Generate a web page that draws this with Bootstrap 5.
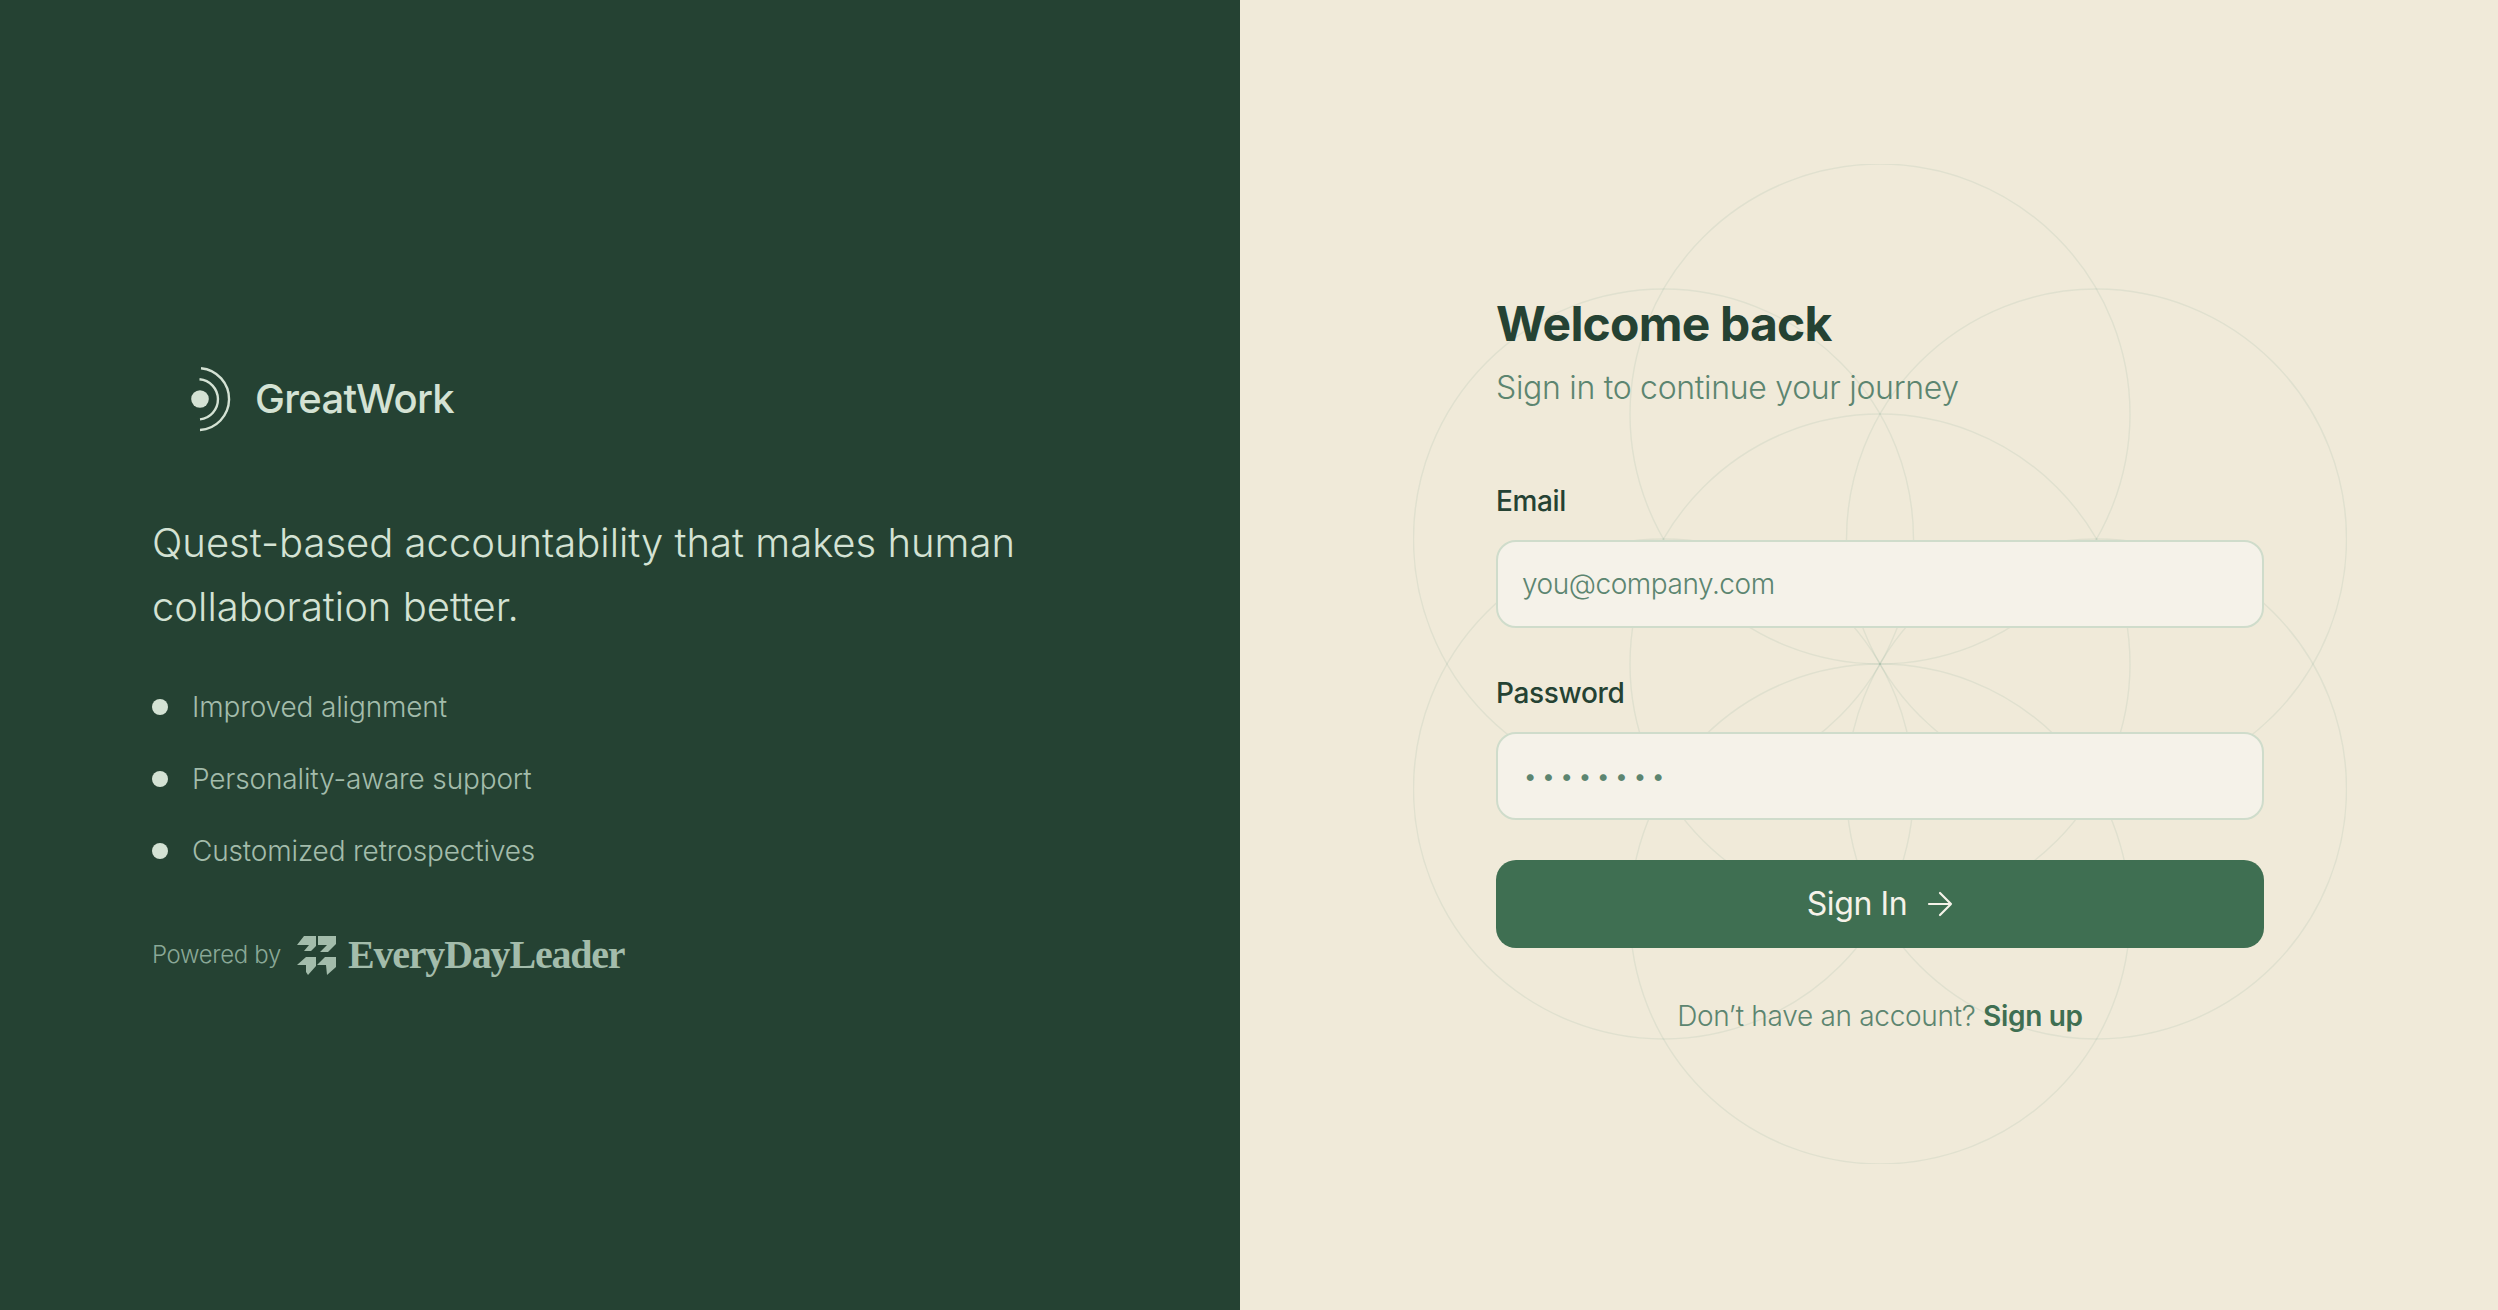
<!DOCTYPE html>
<html lang="en">
<head>
<meta charset="utf-8">
<title>GreatWork</title>
<link href="https://cdn.jsdelivr.net/npm/bootstrap@5.3.0/dist/css/bootstrap.min.css" rel="stylesheet">
<style>
html,body{height:100%;}
body{font-family:"Inter","Noto Sans",sans-serif;background:#f0ead9;}
.shell{height:1310px;}
.brand-side{width:1240px;flex:none;background:#254233;padding-left:152px;padding-top:30.5px;}
.brand-name{font-size:40px;font-weight:500;color:#d4e2d4;letter-spacing:-.7px;line-height:1;margin-left:1px;}
.brand-logo{margin-left:38px;}
.tagline{font-size:40px;line-height:64px;font-weight:350;color:#d4e2d4;width:900px;margin:79px 0 0;}
.perks{margin:32px 0 0;padding:0;list-style:none;}
.perks li{height:72px;display:flex;align-items:center;gap:24px;font-size:28px;font-weight:300;color:#a3bcab;letter-spacing:-.15px;}
.perk-dot{width:16px;height:16px;border-radius:50%;background:#d4e2d4;flex:none;}
.powered{margin-top:48.5px;color:#8aa897;font-size:24px;font-weight:300;letter-spacing:-.35px;}
.edl-mark{margin:0 12px 0 16px;}
.edl{font-family:"Liberation Serif",serif;font-size:40px;font-weight:700;color:#a3bcab;letter-spacing:-1.2px;line-height:1;}
.form-side{padding-left:22px;}
.form-box{width:768px;position:relative;margin-top:22px;}
.flower{position:absolute;left:-83px;top:-131px;width:934px;pointer-events:none;}
.form-inner{position:relative;}
.title{font-size:48px;font-weight:700;color:#254233;letter-spacing:-.8px;line-height:1.2;margin:0;}
.sub{font-size:32px;font-weight:300;color:#5c8570;letter-spacing:-.3px;margin:11px 0 0;line-height:1.5;}
.sign-form{margin-top:69px;}
.field-wrap{margin-bottom:45px;}
.field-wrap.last-field{margin-bottom:40px;}
.form-label{font-size:28px;font-weight:450;color:#254233;line-height:40px;margin-bottom:19px;letter-spacing:-.35px;}
.form-control.field{height:88px;border:2px solid #cfdccb;border-radius:20px;background:#f5f2e9;font-size:28px;padding:0 24px;color:#5c8570;letter-spacing:-.45px;}
.form-control.field::placeholder{color:#5c8570;opacity:1;font-weight:300;}
.form-control.field.secret{font-size:22px;letter-spacing:5.9px;padding-left:26px;}
.btn.go{height:88px;border-radius:20px;background:#3f6f52;border:0;color:#f5f2e9;font-size:32px;font-weight:400;gap:20px;letter-spacing:-.4px;}
.foot{font-size:28px;font-weight:300;color:#5c8570;margin:47px 0 0;letter-spacing:-.3px;line-height:1.5;}
.foot a{color:#3f6f52;font-weight:600;text-decoration:none;}
</style>
</head>
<body>
<div class="shell d-flex">
  <div class="brand-side d-flex flex-column justify-content-center">
    <div class="d-flex align-items-center">
      <svg class="brand-logo" width="64" height="66" viewBox="0 0 64 66" fill="none" stroke="#d4e2d4" stroke-width="2.4" aria-hidden="true">
        <circle cx="10" cy="33" r="8.8" fill="#d4e2d4" stroke="none"/>
        <path d="M9.5 13.2A20.2 20.2 0 0 1 10 53.4"/>
        <path d="M11 2.2A31 31 0 0 1 10 64"/>
      </svg>
      <span class="brand-name">GreatWork</span>
    </div>
    <p class="tagline">Quest-based accountability that makes human collaboration better.</p>
    <ul class="perks">
      <li><span class="perk-dot"></span>Improved alignment</li>
      <li><span class="perk-dot"></span>Personality-aware support</li>
      <li><span class="perk-dot"></span>Customized retrospectives</li>
    </ul>
    <div class="powered d-flex align-items-center">
      <span>Powered by</span>
      <svg class="edl-mark" width="39" height="39" viewBox="0 0 39 39" fill="#a3bcab" aria-hidden="true">
        <path d="M0 9 7 0H19V10L14 15H7L12 9Z"/>
        <path d="M21 0H39V8L31 16H23L30 9H21Z"/>
        <path d="M0 29 9 21H19V30L11 39 9 36V29Z"/>
        <path d="M20 29 28 21H39V31L30 39 29 29Z"/>
      </svg>
      <span class="edl">EveryDayLeader</span>
    </div>
  </div>
  <div class="form-side flex-grow-1 d-flex align-items-center justify-content-center">
    <div class="form-box">
      <svg class="flower" viewBox="0 0 934 1000" fill="none" stroke="#3f7f6a" stroke-opacity=".085" stroke-width="1.4" aria-hidden="true">
        <circle cx="467" cy="500" r="250"/>
        <circle cx="467" cy="250" r="250"/>
        <circle cx="467" cy="750" r="250"/>
        <circle cx="250.5" cy="375" r="250"/>
        <circle cx="683.5" cy="375" r="250"/>
        <circle cx="250.5" cy="625" r="250"/>
        <circle cx="683.5" cy="625" r="250"/>
      </svg>
      <div class="form-inner">
        <h1 class="title">Welcome back</h1>
        <p class="sub">Sign in to continue your journey</p>
        <form class="sign-form">
          <div class="field-wrap">
            <label class="form-label" for="em">Email</label>
            <input id="em" class="form-control field" type="email" placeholder="you@company.com">
          </div>
          <div class="field-wrap last-field">
            <label class="form-label" for="pw">Password</label>
            <input id="pw" class="form-control field secret" type="password" value="password">
          </div>
          <button type="button" class="btn go w-100 d-flex align-items-center justify-content-center">
            <span>Sign In</span>
            <svg width="26" height="26" viewBox="0 0 26 26" fill="none" stroke="#f5f2e9" stroke-width="2.2" stroke-linecap="round" stroke-linejoin="round" aria-hidden="true"><path d="M2 13H24M13 2l11 11-11 11"/></svg>
          </button>
        </form>
        <p class="foot text-center">Don’t have an account? <a href="#">Sign up</a></p>
      </div>
    </div>
  </div>
</div>
<script src="https://cdn.jsdelivr.net/npm/bootstrap@5.3.0/dist/js/bootstrap.bundle.min.js"></script>
</body>
</html>
